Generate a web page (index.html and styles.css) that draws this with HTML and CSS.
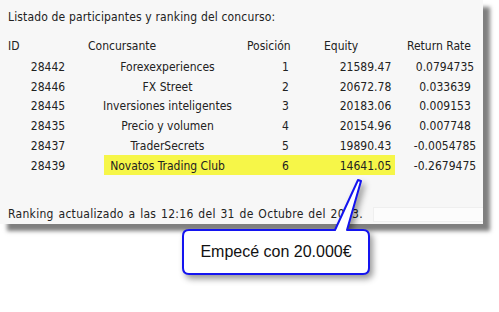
FILE: index.html
```html
<!DOCTYPE html>
<html lang="es">
<head>
<meta charset="utf-8">
<title>Ranking del concurso</title>
<link rel="stylesheet" href="styles.css">
</head>
<body>
<div class="page">
  <div class="panel">
    <p class="title">Listado de participantes y ranking del concurso:</p>
    <div class="ranking">
      <div class="row head">
        <div>ID</div><div>Concursante</div><div>Posición</div><div>Equity</div><div>Return Rate</div>
      </div>
      <div class="row"><div>28442</div><div>Forexexperiences</div><div>1</div><div>21589.47</div><div>0.0794735</div></div>
      <div class="row"><div>28446</div><div>FX Street</div><div>2</div><div>20672.78</div><div>0.033639</div></div>
      <div class="row"><div>28445</div><div>Inversiones inteligentes</div><div>3</div><div>20183.06</div><div>0.009153</div></div>
      <div class="row"><div>28435</div><div>Precio y volumen</div><div>4</div><div>20154.96</div><div>0.007748</div></div>
      <div class="row"><div>28437</div><div>TraderSecrets</div><div>5</div><div>19890.43</div><div>-0.0054785</div></div>
      <div class="row marked"><div>28439</div><div>Novatos Trading Club</div><div>6</div><div>14641.05</div><div>-0.2679475</div></div>
    </div>
    <div class="footer">
      <span class="updated">Ranking actualizado a las 12:16 del 31 de Octubre del 2013.</span>
      <span class="field"></span>
    </div>
  </div>

  <div class="callout">
    <svg class="bubble" width="499" height="312" viewBox="0 0 499 312" aria-hidden="true">
      <path d="M189 230 L335 230 L358 180 L361 181 L347 230 L363 230 Q369 230 369 236 L369 268 Q369 274 363 274 L189 274 Q183 274 183 268 L183 236 Q183 230 189 230 Z" fill="#ffffff" stroke="#1414f0" stroke-width="2" stroke-linejoin="round"/>
    </svg>
    <div class="callout-text">Empecé con 20.000€</div>
  </div>
</div>
</body>
</html>
```

FILE: styles.css
```css
html, body {
  margin: 0;
  padding: 0;
  background: #ffffff;
}

.page {
  position: relative;
  width: 499px;
  height: 312px;
  overflow: hidden;
}

.panel {
  width: 483px;
  height: 224px;
  box-sizing: border-box;
  padding: 6px 0 0 8px;
  background: #f7f7f7;
  box-shadow: 7px 7px 4px rgba(0, 0, 0, 0.5);
  font-family: "DejaVu Sans Condensed", "DejaVu Sans", sans-serif;
  font-size: 12px;
  color: #222222;
  display: flex;
  flex-direction: column;
}

.title {
  margin: 0;
  box-sizing: border-box;
  height: 20px;
  padding-top: 1px;
  line-height: 20px;
  letter-spacing: 0.15px;
}

.ranking {
  margin: 10px 0 0 -8px;
  display: flex;
  flex-direction: column;
}

.row {
  display: grid;
  grid-template-columns: 80px 159px 77px 83px 76px;
  height: 19.8px;
  line-height: 19.8px;
  padding-left: 8px;
  text-align: center;
  white-space: nowrap;
}

.row > div {
  padding-top: 2px;
}

.row.head {
  text-align: left;
}

.row.head > div {
  padding-top: 1px;
}

.row.marked {
  background: linear-gradient(#f6f648, #f6f648) no-repeat;
  background-position: 104px 0;
  background-size: 291px 100%;
}

.footer {
  margin-top: auto;
  height: 20px;
  display: flex;
  align-items: center;
}

.updated {
  line-height: 20px;
  letter-spacing: 0.3px;
  word-spacing: 1px;
  white-space: nowrap;
}

.field {
  margin-left: auto;
  width: 110px;
  height: 15px;
  box-sizing: border-box;
  background: #fcfcfc;
  border: 1px solid #efefef;
  border-right: none;
}

.callout {
  position: absolute;
  left: 0;
  top: 0;
  width: 499px;
  height: 312px;
  pointer-events: none;
}

.bubble {
  position: absolute;
  left: 0;
  top: 0;
  filter: drop-shadow(3px 4px 3px rgba(0, 0, 0, 0.4));
}

.callout-text {
  position: absolute;
  left: 183px;
  top: 230px;
  width: 186px;
  height: 44px;
  display: flex;
  align-items: center;
  justify-content: center;
  font-family: "Liberation Sans", Arial, sans-serif;
  font-size: 16px;
  color: #111111;
}
```
